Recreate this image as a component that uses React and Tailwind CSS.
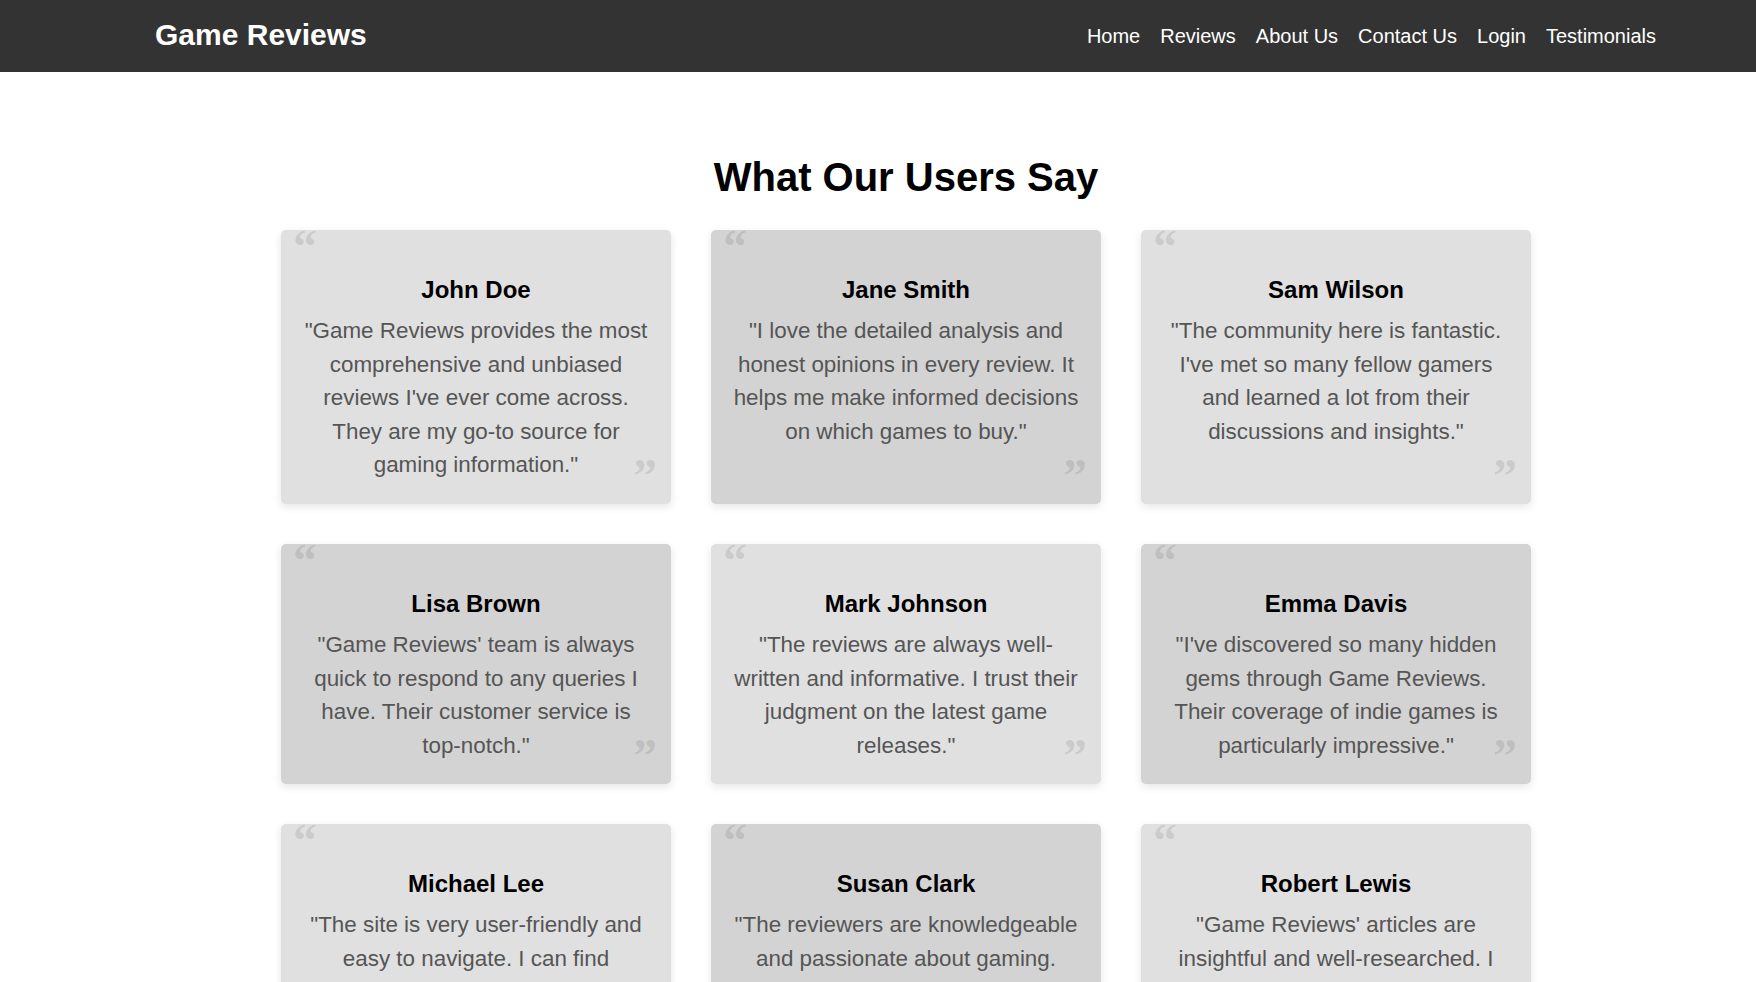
import React from "react";

const testimonials = [
  {
    name: "John Doe",
    text: "Game Reviews provides the most comprehensive and unbiased reviews I've ever come across. They are my go-to source for gaming information.",
  },
  {
    name: "Jane Smith",
    text: "I love the detailed analysis and honest opinions in every review. It helps me make informed decisions on which games to buy.",
  },
  {
    name: "Sam Wilson",
    text: "The community here is fantastic. I've met so many fellow gamers and learned a lot from their discussions and insights.",
  },
  {
    name: "Lisa Brown",
    text: "Game Reviews' team is always quick to respond to any queries I have. Their customer service is top-notch.",
  },
  {
    name: "Mark Johnson",
    text: "The reviews are always well-written and informative. I trust their judgment on the latest game releases.",
  },
  {
    name: "Emma Davis",
    text: "I've discovered so many hidden gems through Game Reviews. Their coverage of indie games is particularly impressive.",
  },
  {
    name: "Michael Lee",
    text: "The site is very user-friendly and easy to navigate. I can find everything I need quickly and easily.",
  },
  {
    name: "Susan Clark",
    text: "The reviewers are knowledgeable and passionate about gaming. Their enthusiasm is truly contagious.",
  },
  {
    name: "Robert Lewis",
    text: "Game Reviews' articles are insightful and well-researched. I learn something new every time I visit.",
  },
];

const navLinks = ["Home", "Reviews", "About Us", "Contact Us", "Login", "Testimonials"];

function Header() {
  return (
    <header className="h-[72px] bg-[#333333] flex items-center justify-between pl-[155px] pr-[100px] text-white">
      <h1 className="text-[30px] font-bold leading-none -mt-[2px]">Game Reviews</h1>
      <nav>
        <ul className="flex gap-5 text-[20px] leading-none -mt-[1px]">
          {navLinks.map((link) => (
            <li key={link}>
              <a href="#" className="text-white">
                {link}
              </a>
            </li>
          ))}
        </ul>
      </nav>
    </header>
  );
}

function TestimonialCard({ name, text, index }) {
  const bg = index % 2 === 0 ? "bg-[#e0e0e0]" : "bg-[#d3d3d3]";
  return (
    <div
      className={`relative ${bg} rounded-[5px] px-5 pt-[46px] pb-[22px] text-center shadow-[0_3px_8px_rgba(0,0,0,0.1)]`}
    >
      <span className="absolute top-[-7px] left-[12px] text-[48px] leading-none text-[rgba(0,0,0,0.1)] font-['Liberation_Serif',serif] font-bold select-none">
        &ldquo;
      </span>
      <h3 className="text-[24px] font-bold text-black leading-[normal] mb-[10px]">{name}</h3>
      <p className="text-[22.4px] leading-[1.5] text-[#555555]">"{text}"</p>
      <span className="absolute bottom-[4px] right-[14px] text-[48px] leading-none text-[rgba(0,0,0,0.1)] font-['Liberation_Serif',serif] font-bold select-none">
        &rdquo;
      </span>
    </div>
  );
}

export default function App() {
  return (
    <div className="min-h-screen bg-white font-['Liberation_Sans',Arial,sans-serif]">
      <Header />
      <main className="pl-[281px] pr-[225px] pt-[83px] pb-10">
        <h2 className="text-[40px] font-bold text-black text-center leading-[normal] mb-[30px]">
          What Our Users Say
        </h2>
        <div className="grid grid-cols-[repeat(3,390px)] gap-10">
          {testimonials.map((t, i) => (
            <TestimonialCard key={t.name} name={t.name} text={t.text} index={i} />
          ))}
        </div>
      </main>
    </div>
  );
}
